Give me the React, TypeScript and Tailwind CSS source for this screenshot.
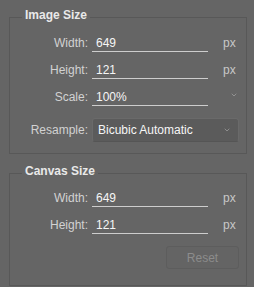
import { ChevronDown } from "lucide-react";

const font = { fontFamily: '"Liberation Sans", Arial, sans-serif' };

function Field({ label, value, unit = "px", chevron = false }: { label: string; value: string; unit?: string; chevron?: boolean }) {
  return (
    <div className="flex h-[22px] items-end">
      <div className="w-[78px] text-right text-[12px] leading-[16px] text-[#d2d2d2] pb-[1px]">{label}</div>
      <div className="ml-[4px] w-[116px] border-b border-[#cdcdcd] pl-[4px] text-[12px] leading-[16px] text-[#f6f6f6]">
        {value}
      </div>
      {chevron ? (
        <div className="ml-[22px] mb-[7px] text-[#a8a8a8]">
          <ChevronDown size={8} strokeWidth={2} />
        </div>
      ) : (
        <div className="ml-[15px] text-[12px] leading-[16px] text-[#c8c8c8] pb-[1px]">{unit}</div>
      )}
    </div>
  );
}

function Group({ title, children, className = "" }: { title: string; children: React.ReactNode; className?: string }) {
  return (
    <fieldset className={"ml-[9px] w-[238px] border border-[#585858] " + className}>
      <legend className="ml-[12px] px-[3px] pb-[4px] text-[12px] font-bold leading-[16px] text-[#e9e9e9]">{title}</legend>
      {children}
    </fieldset>
  );
}

export default function App() {
  return (
    <div className="h-[287px] w-[254px] overflow-hidden bg-[#656565] pt-[7px]" style={font}>
      <Group title="Image Size" className="pb-[11px]">
        <div className="flex flex-col gap-[5px] pt-[3px]">
          <Field label="Width:" value="649" />
          <Field label="Height:" value="121" />
          <Field label="Scale:" value="100%" chevron />
        </div>
        <div className="mt-[12px] flex items-center">
          <div className="w-[78px] text-right text-[12px] leading-[16px] text-[#d2d2d2]">Resample:</div>
          <button className="ml-[4px] flex h-[24px] w-[147px] items-center justify-between rounded-[3px] border border-[#6a6a6a] border-b-[#555555] bg-[#5b5b5b] pl-[5px] pr-[7px] text-[12px] text-[#f6f6f6]">
            <span>Bicubic Automatic</span>
            <ChevronDown size={8} strokeWidth={2} className="text-[#a8a8a8]" />
          </button>
        </div>
      </Group>
      <Group title="Canvas Size" className="mt-[9px] pb-[16px]">
        <div className="flex flex-col gap-[5px] pt-[2px]">
          <Field label="Width:" value="649" />
          <Field label="Height:" value="121" />
        </div>
        <div className="mt-[12px] flex justify-end pr-[7px]">
          <button className="h-[23px] w-[73px] rounded-[3px] border border-[#5d5d5d] bg-[#646464] text-[12px] text-[#8c8c8c]">Reset</button>
        </div>
      </Group>
    </div>
  );
}
